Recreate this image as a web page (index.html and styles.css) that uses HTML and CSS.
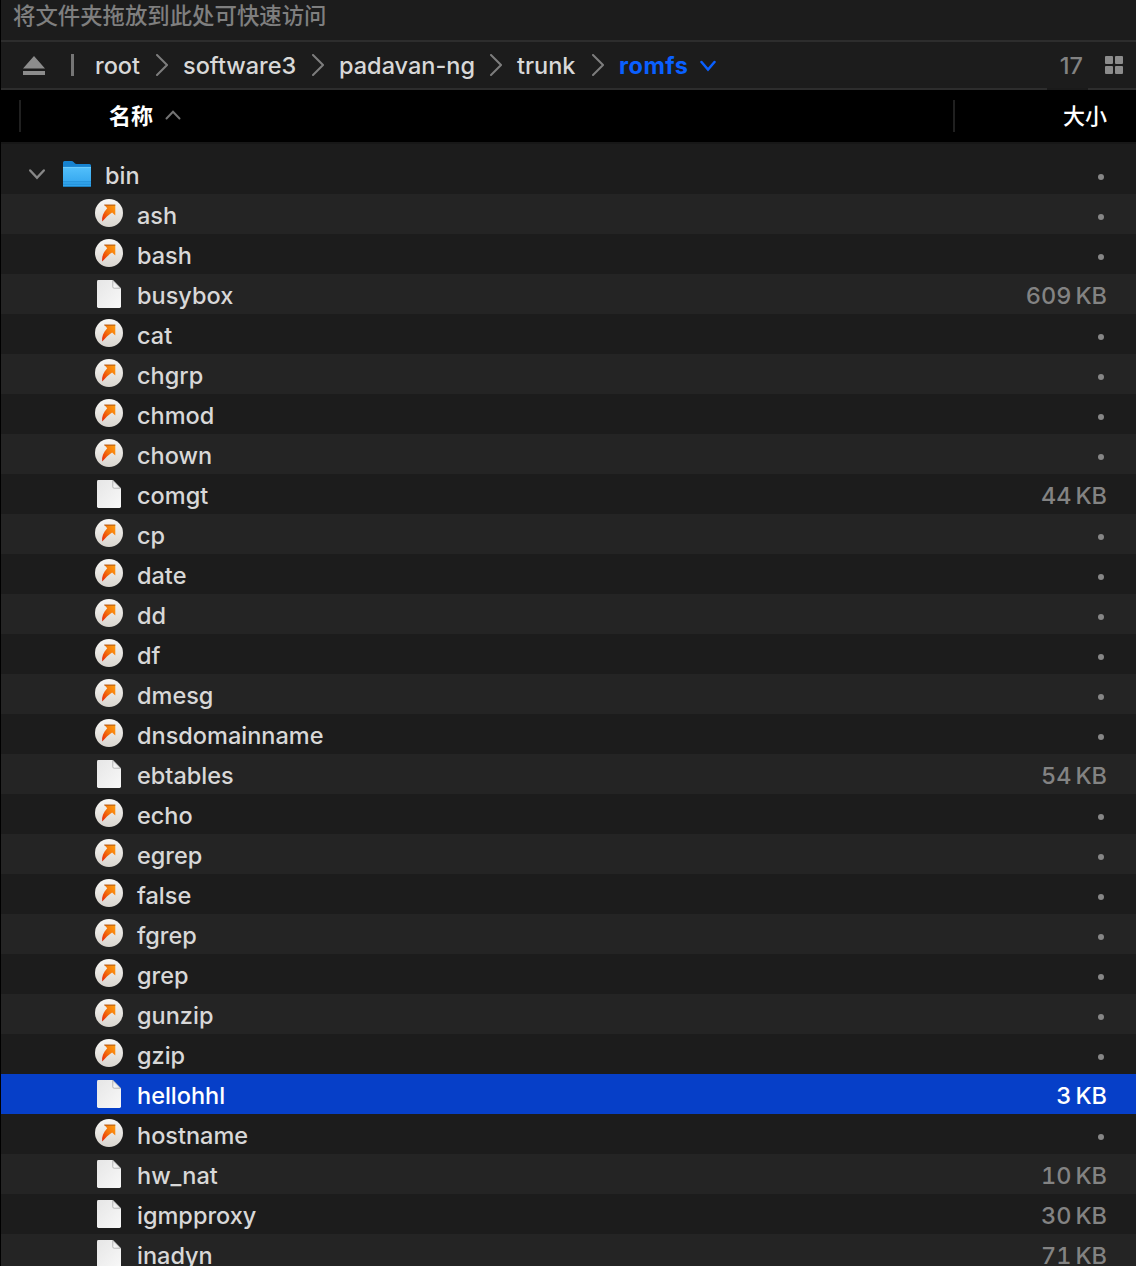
FILE: index.html
```html
<!DOCTYPE html>
<html lang="zh-CN">
<head>
<meta charset="utf-8">
<title>romfs</title>
<link rel="stylesheet" href="styles.css">
</head>
<body>
<svg class="defs" width="0" height="0">
  <defs>
    <linearGradient id="disc" x1="0" y1="0" x2="0" y2="1"><stop offset="0" stop-color="#f8f7f5"/><stop offset="1" stop-color="#d9d5cf"/></linearGradient>
    <linearGradient id="flame" x1="1" y1="0" x2="0" y2="1"><stop offset="0" stop-color="#ffa012"/><stop offset=".5" stop-color="#f5740b"/><stop offset="1" stop-color="#e51f08"/></linearGradient>
    <linearGradient id="paper" x1="0" y1="0" x2="1" y2="1"><stop offset="0" stop-color="#e6e6e6"/><stop offset="1" stop-color="#f8f8f8"/></linearGradient>
    <linearGradient id="fold" x1="0" y1="1" x2="1" y2="0"><stop offset="0" stop-color="#ffffff"/><stop offset=".5" stop-color="#e8e8e8"/></linearGradient>
    <linearGradient id="front" x1="0" y1="0" x2="0" y2="1"><stop offset="0" stop-color="#53c0fb"/><stop offset="1" stop-color="#2ea2ec"/></linearGradient>
  </defs>
  <symbol id="link" viewBox="0 0 30 30">
    <circle cx="15" cy="15" r="14" fill="url(#disc)"/>
    <path d="M10.2 6.8H21.3V17.5L18.1 14.6C14.2 17 11.6 20 8.2 23.6C7.6 18.8 9.2 14.4 13.2 10.2Z" fill="url(#flame)"/>
    <path d="M10.2 7.1H21.3" stroke="#8f3d10" stroke-width=".9" opacity=".75"/>
  </symbol>
  <symbol id="doc" viewBox="0 0 24 29">
    <path d="M1.4 0H16L24 8V26.6Q24 28 22.6 28H1.4Q0 28 0 26.6V1.4Q0 0 1.4 0Z" fill="url(#paper)"/>
    <path d="M15.8 .2V6.8Q15.8 8.2 17.2 8.2H23.8Z" fill="url(#fold)" stroke="#9c9c9c" stroke-width=".7"/>
    <path d="M16.3 0H24V8Z" class="corner"/>
  </symbol>
</svg>
<main class="browser">
  <div class="shelf">将文件夹拖放到此处可快速访问</div>
  <nav class="path">
    <svg class="eject" viewBox="0 0 22 19"><path d="M11 0L22 12.6H0ZM0 15H22V19H0Z" fill="#8c8c8c"/></svg>
    <span class="bar"></span>
    <span class="crumb root"><span>root</span><svg class="chev" viewBox="0 0 12 22"><path d="M1 1L11 11L1 21"/></svg></span>
    <span class="crumb software"><span>software3</span><svg class="chev" viewBox="0 0 12 22"><path d="M1 1L11 11L1 21"/></svg></span>
    <span class="crumb padavan"><span>padavan-ng</span><svg class="chev" viewBox="0 0 12 22"><path d="M1 1L11 11L1 21"/></svg></span>
    <span class="crumb trunk"><span>trunk</span><svg class="chev" viewBox="0 0 12 22"><path d="M1 1L11 11L1 21"/></svg></span>
    <span class="crumb current"><span>romfs</span></span>
    <svg class="down" viewBox="0 0 16 12"><path d="M1.5 2L8 9.5L14.5 2"/></svg>
    <span class="count">17</span>
    <svg class="grid" viewBox="0 0 18 18"><path d="M1 0H7Q8 0 8 1V7Q8 8 7 8H1Q0 8 0 7V1Q0 0 1 0ZM11 0H17Q18 0 18 1V7Q18 8 17 8H11Q10 8 10 7V1Q10 0 11 0ZM1 10H7Q8 10 8 11V17Q8 18 7 18H1Q0 18 0 17V11Q0 10 1 10ZM11 10H17Q18 10 18 11V17Q18 18 17 18H11Q10 18 10 17V11Q10 10 11 10Z" fill="#8c8c8c"/></svg>
  </nav>
  <div class="edge"><span></span></div>
  <header class="columns">
    <div class="col-name">名称<svg viewBox="0 0 16 10"><path d="M1.5 8.5L8 1.8L14.5 8.5"/></svg></div>
    <div class="col-size">大小</div>
  </header>
  <div class="list">
    <div class="row folder"><svg class="toggle" viewBox="0 0 16 11"><path d="M1.2 1.5L8 8.8L14.8 1.5"/></svg><svg class="dir" viewBox="0 0 28 27"><path d="M0 1.5Q0 0 1.5 0H8.5Q9.8 0 10.6 1L11.5 2Q12.3 3 13.6 3H26.5Q28 3 28 4.5V24H0Z" fill="#1682cf"/><path d="M0 6H28V24.8Q28 26 26.8 26H1.2Q0 26 0 24.8Z" fill="url(#front)"/><path d="M0 6.4H28" stroke="#75d2fe" stroke-width=".8"/><path d="M0 20.8H28M0 23.2H28" stroke="#238ed4"/><path d="M.5 25.5H27.5" stroke="#1c7dbb"/></svg><span class="name">bin</span><i class="dot"></i></div>
    <div class="row"><svg class="link"><use href="#link"/></svg><span class="name">ash</span><i class="dot"></i></div>
    <div class="row"><svg class="link"><use href="#link"/></svg><span class="name">bash</span><i class="dot"></i></div>
    <div class="row"><svg class="doc"><use href="#doc"/></svg><span class="name">busybox</span><span class="size">609<b>KB</b></span></div>
    <div class="row"><svg class="link"><use href="#link"/></svg><span class="name">cat</span><i class="dot"></i></div>
    <div class="row"><svg class="link"><use href="#link"/></svg><span class="name">chgrp</span><i class="dot"></i></div>
    <div class="row"><svg class="link"><use href="#link"/></svg><span class="name">chmod</span><i class="dot"></i></div>
    <div class="row"><svg class="link"><use href="#link"/></svg><span class="name">chown</span><i class="dot"></i></div>
    <div class="row"><svg class="doc"><use href="#doc"/></svg><span class="name">comgt</span><span class="size">44<b>KB</b></span></div>
    <div class="row"><svg class="link"><use href="#link"/></svg><span class="name">cp</span><i class="dot"></i></div>
    <div class="row"><svg class="link"><use href="#link"/></svg><span class="name">date</span><i class="dot"></i></div>
    <div class="row"><svg class="link"><use href="#link"/></svg><span class="name">dd</span><i class="dot"></i></div>
    <div class="row"><svg class="link"><use href="#link"/></svg><span class="name">df</span><i class="dot"></i></div>
    <div class="row"><svg class="link"><use href="#link"/></svg><span class="name">dmesg</span><i class="dot"></i></div>
    <div class="row"><svg class="link"><use href="#link"/></svg><span class="name">dnsdomainname</span><i class="dot"></i></div>
    <div class="row"><svg class="doc"><use href="#doc"/></svg><span class="name">ebtables</span><span class="size">54<b>KB</b></span></div>
    <div class="row"><svg class="link"><use href="#link"/></svg><span class="name">echo</span><i class="dot"></i></div>
    <div class="row"><svg class="link"><use href="#link"/></svg><span class="name">egrep</span><i class="dot"></i></div>
    <div class="row"><svg class="link"><use href="#link"/></svg><span class="name">false</span><i class="dot"></i></div>
    <div class="row"><svg class="link"><use href="#link"/></svg><span class="name">fgrep</span><i class="dot"></i></div>
    <div class="row"><svg class="link"><use href="#link"/></svg><span class="name">grep</span><i class="dot"></i></div>
    <div class="row"><svg class="link"><use href="#link"/></svg><span class="name">gunzip</span><i class="dot"></i></div>
    <div class="row"><svg class="link"><use href="#link"/></svg><span class="name">gzip</span><i class="dot"></i></div>
    <div class="row selected"><svg class="doc"><use href="#doc"/></svg><span class="name">hellohhl</span><span class="size">3<b>KB</b></span></div>
    <div class="row"><svg class="link"><use href="#link"/></svg><span class="name">hostname</span><i class="dot"></i></div>
    <div class="row"><svg class="doc"><use href="#doc"/></svg><span class="name">hw_nat</span><span class="size">10<b>KB</b></span></div>
    <div class="row"><svg class="doc"><use href="#doc"/></svg><span class="name">igmpproxy</span><span class="size">30<b>KB</b></span></div>
    <div class="row"><svg class="doc"><use href="#doc"/></svg><span class="name">inadyn</span><span class="size">71<b>KB</b></span></div>
  </div>
</main>
</body>
</html>
```
FILE: styles.css
```css
* { box-sizing: border-box; }
html, body { margin: 0; height: 1266px; overflow: hidden; background: #1c1c1c; }
body { font: 450 23.5px Inter, "Noto Sans CJK SC", sans-serif; color: #d8d8d8; }
svg { display: block; flex: none; }
.defs { position: absolute; }
.browser { height: 1266px; border-left: 1px solid #000; overflow: hidden; }
.shelf { height: 42px; padding-left: 12px; border-bottom: 2px solid #2d2d2d; font: 500 22.4px/29px "Noto Sans CJK SC", sans-serif; color: #7f7f7f; }
.path { display: flex; height: 46px; padding: 0 13px 0 22px; line-height: 47px; }
.eject { width: 22px; height: 19px; margin-top: 14px; }
.bar { width: 3px; height: 22px; margin: 12px 0 0 26px; background: #757575; }
.root { margin-left: 21px; width: 88px; }
.crumb { display: flex; }
.software { width: 156px; }
.padavan { width: 178px; }
.trunk { width: 102px; }
.current { width: 69px; font-weight: 700; letter-spacing: .5px; color: #0a60ff; }
.chev { width: 12px; height: 22px; margin: 12px 15px 0 auto; fill: none; stroke: #7d7d7d; stroke-width: 2; stroke-linecap: round; }
.down { width: 16px; height: 12px; margin: 18px 0 0 12px; fill: none; stroke: #0a60ff; stroke-width: 2.5; stroke-linecap: round; }
.count { margin-left: auto; color: #828282; }
.grid { width: 18px; height: 18px; margin: 14px 0 0 22px; }
.edge { height: 2px; background: #2d2d2d; padding-left: 1046px; }
.edge span { display: block; width: 41px; height: 2px; background: #1a1a1a; }
.columns { display: flex; justify-content: space-between; height: 54px; padding: 10px 29px 0 18px; background: #000; border-bottom: 2px solid #171717; font: 500 22px/28px "Noto Sans CJK SC", sans-serif; color: #fff; }
.col-name { display: flex; height: 32px; width: 936px; padding-left: 88px; border-left: 2px solid #202020; border-right: 2px solid #202020; font-weight: 700; }
.col-name svg { width: 16px; height: 10px; margin: 10px 0 0 12px; fill: none; stroke: #737373; stroke-width: 2; stroke-linecap: round; }
.list { padding-top: 10px; }
.row { display: flex; height: 40px; padding: 0 29px 0 93px; line-height: 43px; }
.row:nth-child(even) { background: #242424; }
.row.selected { background: #063fc8; color: #fff; font-weight: 500; }
.folder { padding-left: 28px; }
.toggle { width: 16px; height: 11px; margin: 15px 18px 0 0; fill: none; stroke: #878787; stroke-width: 2.4; stroke-linecap: round; }
.dir { width: 28px; height: 27px; margin: 7px 14px 0 0; }
.link { width: 30px; height: 30px; margin: 4px 13px 0 0; }
.doc { width: 24px; height: 29px; margin: 6px 16px 0 3px; }
.row:nth-child(odd) .doc { color: #1c1c1c; }
.row:nth-child(even) .doc { color: #242424; }
.row.selected .doc { color: #063fc8; }
.corner { fill: currentColor; }
.size { margin-left: auto; color: #838383; font-variant-numeric: tabular-nums; }
.size b { font-weight: inherit; margin-left: 4px; }
.selected .size { color: #fff; }
.dot { width: 6px; height: 6px; margin: 20px 3px 0 auto; border-radius: 50%; background: #868686; }
```
